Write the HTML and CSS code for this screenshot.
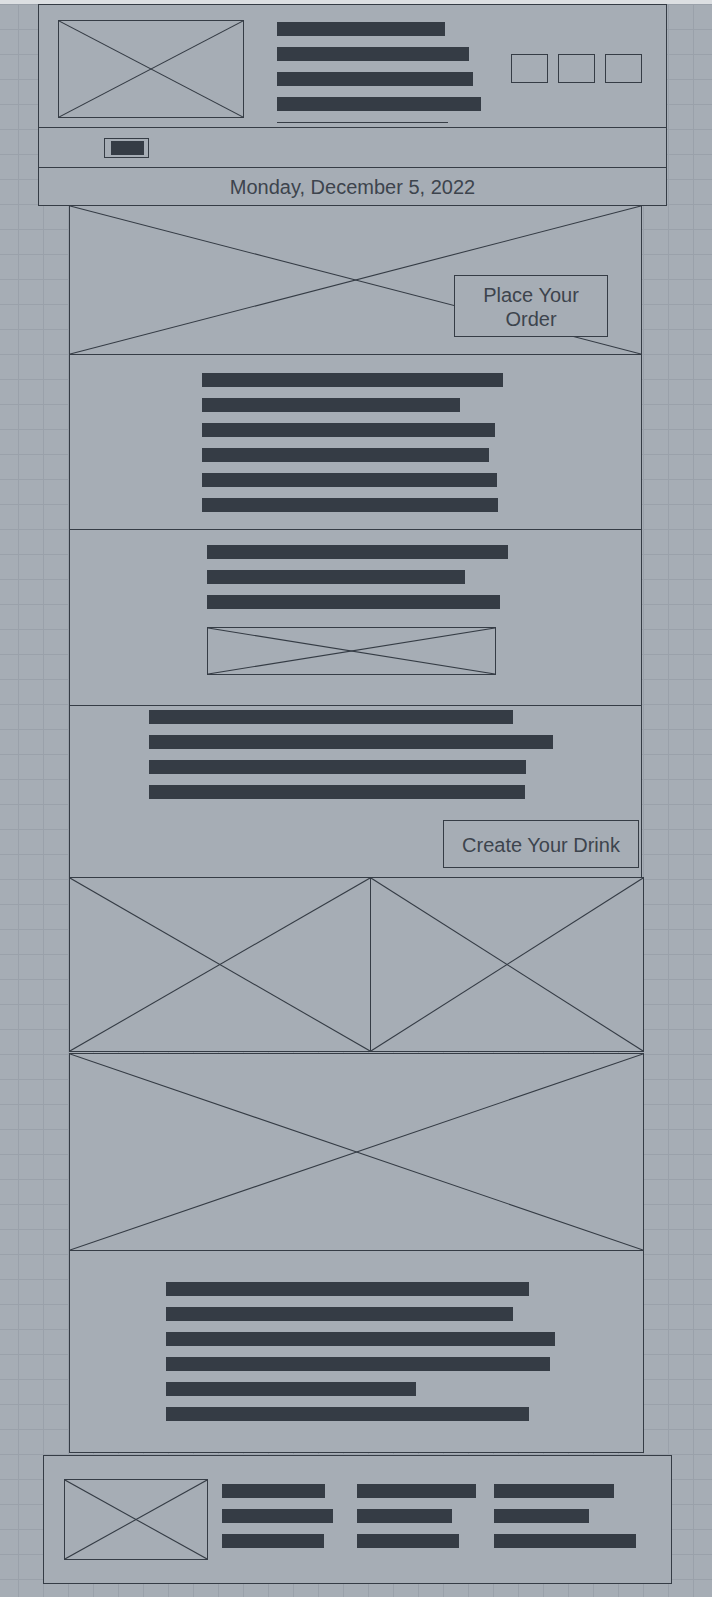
FILE: index.html
```html
<!DOCTYPE html>
<html lang="en">
<head>
  <meta charset="UTF-8" />
  <meta name="viewport" content="width=device-width, initial-scale=1.0" />
  <title>Coffee Shop Wireframe</title>
  <link rel="stylesheet" href="styles.css">
</head>
<body>

  <div class="topbar"></div>

  <!-- Header -->
  <div class="site-header">
    <div class="head-top">
      <div class="ph logo-ph">
        <svg class="x"><line x1="0" y1="0" x2="100%" y2="100%"/><line x1="0" y1="100%" x2="100%" y2="0"/></svg>
      </div>
      <div class="head-lines">
        <span class="bar" style="width:168px"></span>
        <span class="bar" style="width:192px"></span>
        <span class="bar" style="width:196px"></span>
        <span class="bar" style="width:204px"></span>
        <span class="bar" style="width:171px"></span>
      </div>
      <div class="head-icons">
        <span class="icon-box"></span>
        <span class="icon-box"></span>
        <span class="icon-box"></span>
      </div>
    </div>
    <div class="head-nav">
      <div class="mini-btn"><span class="mini-fill"></span></div>
    </div>
    <div class="head-date">Monday, December 5, 2022</div>
  </div>

  <!-- Hero -->
  <div class="ph hero">
    <svg class="x"><line x1="0" y1="0" x2="100%" y2="100%"/><line x1="0" y1="100%" x2="100%" y2="0"/></svg>
    <div class="order-btn">Place Your<br>Order</div>
  </div>

  <!-- Intro text -->
  <div class="block intro">
    <span class="bar" style="width:301px"></span>
    <span class="bar" style="width:258px"></span>
    <span class="bar" style="width:293px"></span>
    <span class="bar" style="width:287px"></span>
    <span class="bar" style="width:295px"></span>
    <span class="bar" style="width:296px"></span>
  </div>

  <!-- Menu teaser -->
  <div class="block menu">
    <span class="bar" style="width:301px"></span>
    <span class="bar" style="width:258px"></span>
    <span class="bar" style="width:293px"></span>
    <div class="ph menu-ph">
      <svg class="x"><line x1="0" y1="0" x2="100%" y2="100%"/><line x1="0" y1="100%" x2="100%" y2="0"/></svg>
    </div>
  </div>

  <!-- Custom drink -->
  <div class="block drink">
    <span class="bar" style="width:364px"></span>
    <span class="bar" style="width:404px"></span>
    <span class="bar" style="width:377px"></span>
    <span class="bar" style="width:376px"></span>
    <div class="drink-btn">Create Your Drink</div>
  </div>

  <!-- Gallery -->
  <div class="duo">
    <div class="ph duo-left">
      <svg class="x"><line x1="0" y1="0" x2="100%" y2="100%"/><line x1="0" y1="100%" x2="100%" y2="0"/></svg>
    </div>
    <div class="ph duo-right">
      <svg class="x"><line x1="0" y1="0" x2="100%" y2="100%"/><line x1="0" y1="100%" x2="100%" y2="0"/></svg>
    </div>
  </div>

  <div class="ph wide">
    <svg class="x"><line x1="0" y1="0" x2="100%" y2="100%"/><line x1="0" y1="100%" x2="100%" y2="0"/></svg>
  </div>

  <!-- About text -->
  <div class="block about">
    <span class="bar" style="width:363px"></span>
    <span class="bar" style="width:347px"></span>
    <span class="bar" style="width:389px"></span>
    <span class="bar" style="width:384px"></span>
    <span class="bar" style="width:250px"></span>
    <span class="bar" style="width:363px"></span>
  </div>

  <!-- Footer -->
  <div class="site-footer">
    <div class="ph foot-ph">
      <svg class="x"><line x1="0" y1="0" x2="100%" y2="100%"/><line x1="0" y1="100%" x2="100%" y2="0"/></svg>
    </div>
    <div class="foot-col col-1">
      <span class="bar" style="width:103px"></span>
      <span class="bar" style="width:111px"></span>
      <span class="bar" style="width:102px"></span>
    </div>
    <div class="foot-col col-2">
      <span class="bar" style="width:119px"></span>
      <span class="bar" style="width:95px"></span>
      <span class="bar" style="width:102px"></span>
    </div>
    <div class="foot-col col-3">
      <span class="bar" style="width:120px"></span>
      <span class="bar" style="width:95px"></span>
      <span class="bar" style="width:142px"></span>
    </div>
  </div>

</body>
</html>
```

FILE: styles.css
```css
* {
  box-sizing: border-box;
}
body {
  margin: 0;
  font-family: 'Liberation Sans', Arial, sans-serif;
  color: #3d444d;
  background-color: #a6adb5;
  background-image:
    linear-gradient(to right, #9aa1aa 1px, transparent 1px),
    linear-gradient(to bottom, #9aa1aa 1px, transparent 1px);
  background-size: 25px 25px;
  background-position: 18px 4px;
  min-height: 1597px;
}
.topbar {
  height: 4px;
  background: #dcdfe2;
}

/* shared pieces */
.bar {
  display: block;
  height: 14px;
  background: #353c45;
  flex-shrink: 0;
}
.ph {
  border: 1px solid #353c45;
  background: #a6adb5;
}
.x {
  display: block;
  width: 100%;
  height: 100%;
}
.x line {
  stroke: #353c45;
  stroke-width: 1.1;
}

/* header */
.site-header {
  margin-left: 38px;
  width: 629px;
  border: 1px solid #353c45;
  background: #a6adb5;
}
.head-top {
  height: 123px;
  display: flex;
  align-items: flex-start;
  padding: 15px 0 0 19px;
  border-bottom: 1px solid #353c45;
}
.logo-ph {
  width: 186px;
  height: 98px;
}
.head-lines {
  margin-left: 33px;
  margin-top: 2px;
  height: 101px;
  overflow: hidden;
  display: flex;
  flex-direction: column;
  gap: 11px;
}
.head-icons {
  display: flex;
  gap: 10px;
  margin-left: auto;
  margin-right: 24px;
  margin-top: 34px;
}
.icon-box {
  width: 37px;
  height: 29px;
  border: 1px solid #353c45;
}
.head-nav {
  height: 40px;
  display: flex;
  align-items: center;
  padding-left: 65px;
  border-bottom: 1px solid #353c45;
}
.mini-btn {
  border: 1px solid #353c45;
  padding: 2px 4px 2px 6px;
}
.mini-fill {
  display: block;
  width: 33px;
  height: 14px;
  background: #353c45;
}
.head-date {
  height: 37px;
  line-height: 36px;
  padding-top: 1px;
  text-align: center;
  font-size: 20px;
}

/* hero */
.hero {
  position: relative;
  margin: -1px 0 0 69px;
  width: 573px;
  height: 150px;
}
.order-btn {
  position: absolute;
  left: 384px;
  top: 69px;
  width: 154px;
  height: 62px;
  padding-top: 2px;
  border: 1px solid #353c45;
  background: #a6adb5;
  display: flex;
  align-items: center;
  justify-content: center;
  text-align: center;
  font-size: 20px;
  line-height: 24px;
}

/* text sections */
.block {
  margin: -1px 0 0 69px;
  width: 573px;
  border: 1px solid #353c45;
  background: #a6adb5;
  display: flex;
  flex-direction: column;
  align-items: flex-start;
  gap: 11px;
}
.intro {
  height: 176px;
  padding: 18px 0 0 132px;
}
.menu {
  height: 177px;
  padding: 15px 0 0 137px;
}
.menu-ph {
  margin-top: 7px;
  width: 289px;
  height: 48px;
}
.drink {
  height: 173px;
  padding: 4px 0 0 79px;
}
.drink-btn {
  align-self: flex-end;
  margin: 10px 2px 0 0;
  width: 196px;
  height: 48px;
  padding-top: 2px;
  border: 1px solid #353c45;
  display: flex;
  align-items: center;
  justify-content: center;
  font-size: 20px;
}

/* gallery */
.duo {
  display: flex;
  margin: -1px 0 0 69px;
  width: 575px;
  height: 175px;
}
.duo-left {
  width: 302px;
}
.duo-right {
  width: 274px;
  margin-left: -1px;
}
.wide {
  margin: 1px 0 0 69px;
  width: 575px;
  height: 198px;
}
.about {
  width: 575px;
  height: 203px;
  padding: 31px 0 0 96px;
}

/* footer */
.site-footer {
  margin: 2px 0 0 43px;
  width: 629px;
  height: 129px;
  border: 1px solid #353c45;
  background: #a6adb5;
  display: flex;
  align-items: flex-start;
  padding: 23px 0 0 20px;
}
.foot-ph {
  width: 144px;
  height: 81px;
}
.foot-col {
  display: flex;
  flex-direction: column;
  gap: 11px;
  margin-top: 5px;
}
.col-1 {
  margin-left: 14px;
  width: 135px;
}
.col-2 {
  width: 137px;
}
```
